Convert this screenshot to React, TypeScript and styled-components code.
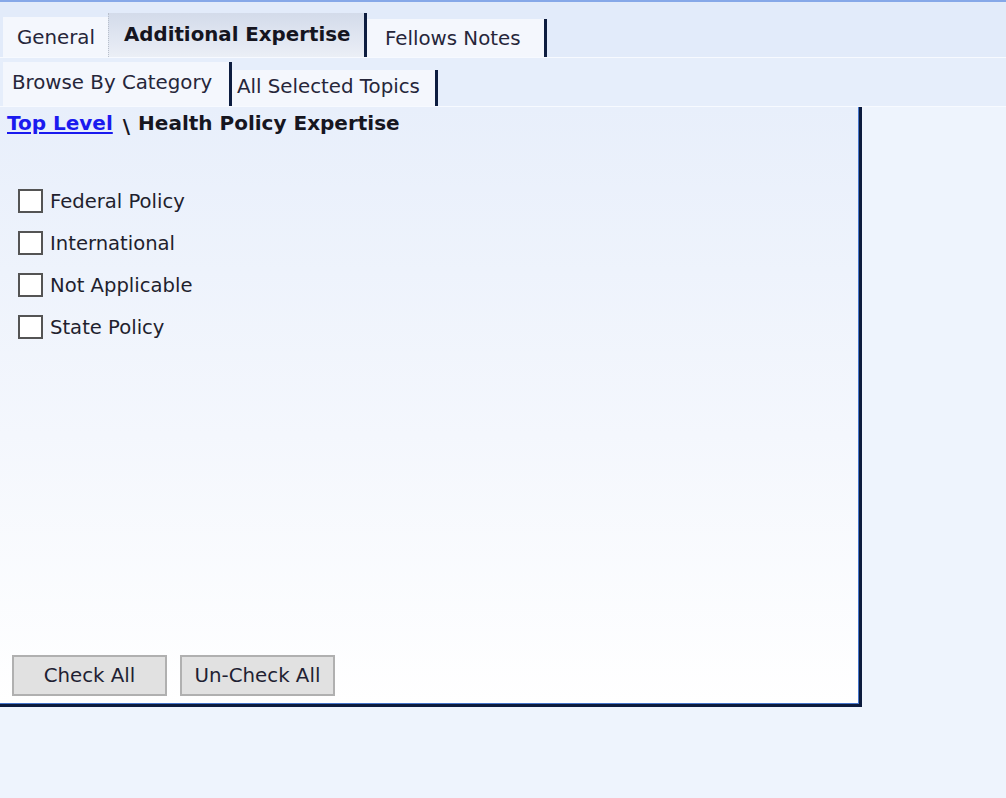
import React from "react";
import styled, { createGlobalStyle } from "styled-components";

const GlobalStyle = createGlobalStyle`
  html, body {
    margin: 0;
    padding: 0;
    background: #eef4fd;
  }
  body {
    font-family: "DejaVu Sans", Verdana, sans-serif;
    color: #1d1d2b;
  }
`;

const Page = styled.div`
  width: 1006px;
  height: 798px;
  overflow: hidden;
  background: #eef4fd;
  border-top: 2px solid #86a8e8;
  box-sizing: border-box;
`;

const TabRow = styled.div<{ $height: number; $bg: string }>`
  display: flex;
  align-items: flex-end;
  height: ${(p) => p.$height}px;
  padding-left: 3px;
  background: ${(p) => p.$bg};
  border-bottom: 1px solid #f7faff;
  box-sizing: border-box;
`;

const Tab = styled.div<{
  $width: number;
  $height: number;
  $active?: boolean;
  $edge?: boolean;
  $pad: number;
  $lift?: number;
}>`
  display: flex;
  align-items: center;
  box-sizing: border-box;
  width: ${(p) => p.$width}px;
  height: ${(p) => p.$height}px;
  padding-left: ${(p) => p.$pad}px;
  padding-bottom: ${(p) => p.$lift ?? 0}px;
  font-size: 19.8px;
  font-weight: ${(p) => (p.$active ? 700 : 400)};
  color: ${(p) => (p.$active ? "#15151f" : "#26263a")};
  white-space: nowrap;
  background: ${(p) =>
    p.$active
      ? "linear-gradient(to bottom, #d3dbea, #e4e9f3 70%, #ebeff6)"
      : "#f4f7fd"};
  border-left: ${(p) => (p.$active ? "1px dotted #b9c0cc" : "none")};
  border-right: ${(p) => (p.$edge ? "3px solid #0d1d40" : "none")};
`;

const Panel = styled.div`
  display: flex;
  flex-direction: column;
  box-sizing: border-box;
  width: 862px;
  height: 600px;
  padding: 4px 0 8px 7px;
  background: linear-gradient(to bottom, #e8effb, #f4f7fd 55%, #ffffff);
  border-right: 3px solid #0c1b3d;
  border-bottom: 3px solid #0c1b3d;
  box-shadow: inset -1px -1px 0 #4676cc;
`;

const Crumbs = styled.div`
  display: flex;
  align-items: baseline;
  font-size: 20px;
  font-weight: 700;
  color: #16161f;
`;

const CrumbLink = styled.a`
  color: #1a1aef;
  text-decoration: underline;
  text-underline-offset: 2px;
  cursor: pointer;
`;

const Sep = styled.span`
  margin: 0 8px 0 10px;
  position: relative;
  top: 3px;
`;

const List = styled.div`
  display: flex;
  flex-direction: column;
  gap: 18px;
  margin-top: 54px;
  padding-left: 11px;
`;

const Item = styled.label`
  display: flex;
  align-items: center;
  gap: 7px;
  font-size: 19.6px;
  color: #1f1f2e;
`;

const Box = styled.span`
  display: inline-block;
  width: 25px;
  height: 24px;
  box-sizing: border-box;
  border: 2px solid #545454;
  background: #ffffff;
`;

const Spacer = styled.div`
  flex: 1;
`;

const Buttons = styled.div`
  display: flex;
  gap: 13px;
  padding-left: 5px;
`;

const Button = styled.button`
  width: 155px;
  height: 41px;
  box-sizing: border-box;
  background: #e1e1e1;
  border: 2px solid #b0b0b0;
  font-family: "DejaVu Sans", Verdana, sans-serif;
  font-size: 19.8px;
  color: #1f1f33;
  padding: 0;
`;

const topics = ["Federal Policy", "International", "Not Applicable", "State Policy"];

export default function App() {
  return (
    <>
      <GlobalStyle />
      <Page>
        <TabRow $height={56} $bg="#e2ebfa">
          <Tab $width={105} $height={40} $pad={14}>General</Tab>
          <Tab $width={259} $height={44} $pad={15} $lift={2} $active $edge>
            Additional Expertise
          </Tab>
          <Tab $width={180} $height={38} $pad={18} $edge>
            Fellows Notes
          </Tab>
        </TabRow>
        <TabRow $height={49} $bg="#e6eefb">
          <Tab $width={229} $height={44} $pad={9} $lift={4} $edge>
            Browse By Category
          </Tab>
          <Tab $width={206} $height={36} $pad={5} $lift={4} $edge>
            All Selected Topics
          </Tab>
        </TabRow>
        <Panel>
          <Crumbs>
            <CrumbLink>Top Level</CrumbLink>
            <Sep>\</Sep>
            <span>Health Policy Expertise</span>
          </Crumbs>
          <List>
            {topics.map((t) => (
              <Item key={t}>
                <Box />
                {t}
              </Item>
            ))}
          </List>
          <Spacer />
          <Buttons>
            <Button>Check All</Button>
            <Button>Un-Check All</Button>
          </Buttons>
        </Panel>
      </Page>
    </>
  );
}
